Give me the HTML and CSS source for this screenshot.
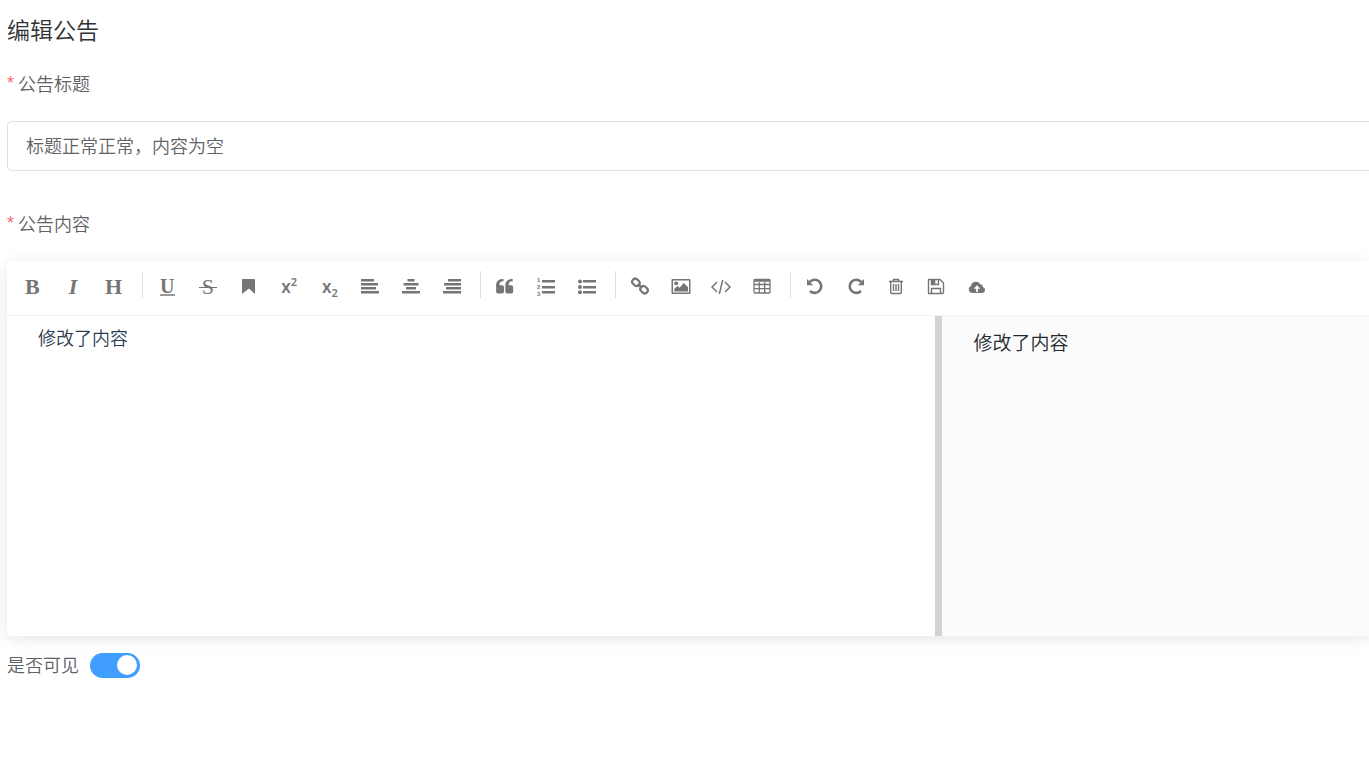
FILE: index.html
```html
<!DOCTYPE html>
<html lang="zh-CN">
<head>
  <meta charset="UTF-8" />
  <meta name="viewport" content="width=device-width, initial-scale=1.0" />
  <title>编辑公告</title>
  <link rel="stylesheet" href="styles.css">
</head>
<body>
  <h1>编辑公告</h1>
  <form class="notice-form">
    <label class="field-label required" for="title">公告标题</label>
    <input class="text-input" type="text" id="title" value="标题正常正常，内容为空" autocomplete="off" />

    <label class="field-label required" for="content">公告内容</label>
    <div class="editor">
      <div class="toolbar">
        <div class="tools tools-3">
          <button type="button" class="serif bold" aria-label="粗体">B</button>
          <button type="button" class="serif bold italic" aria-label="斜体">I</button>
          <button type="button" class="serif heading" aria-label="标题">H</button>
        </div>
        <span class="separator"></span>
        <div class="tools tools-8">
          <button type="button" class="serif underline" aria-label="下划线"><span>U</span></button>
          <button type="button" class="serif strike" aria-label="中划线"><span>S</span></button>
          <button type="button" aria-label="标记">
            <svg viewBox="0 0 22 22"><path d="M5 3h11a1 1 0 0 1 1 1v14l-6-5.500L4 18V4a1 1 0 0 1 1-1z"/></svg>
          </button>
          <button type="button" class="script" aria-label="上角标"><span>x<sup>2</sup></span></button>
          <button type="button" class="script" aria-label="下角标"><span>x<sub>2</sub></span></button>
          <button type="button" aria-label="居左">
            <svg viewBox="0 0 22 22"><path d="M2 3h13v2.500H2zM2 7h17v2.500H2zM2 11h15v2.500H2zM2 15h18v2.500H2z"/></svg>
          </button>
          <button type="button" aria-label="居中">
            <svg viewBox="0 0 22 22"><path d="M7.500 3h7v2.500h-7zM3.500 7h15v2.500h-15zM6 11h10v2.500H6zM2 15h18v2.500H2z"/></svg>
          </button>
          <button type="button" aria-label="居右">
            <svg viewBox="0 0 22 22"><path d="M7 3h13v2.500H7zM3 7h17v2.500H3zM5 11h15v2.500H5zM2 15h18v2.500H2z"/></svg>
          </button>
        </div>
        <span class="separator"></span>
        <div class="tools tools-3">
          <button type="button" aria-label="段落引用">
            <svg viewBox="0 0 22 22"><path d="M9.500 3v2.200H9A3.200 3.200 0 0 0 5.500 8.500v.8h2.600a1.900 1.900 0 0 1 1.900 1.900v4.400a1.900 1.900 0 0 1-1.900 1.900H4a1.900 1.900 0 0 1-1.900-1.900V9.200C2.100 5.500 5 3 8.500 3z"/><path d="M18.700 3v2.200h-.5a3.200 3.200 0 0 0-3.500 3.300v.8h2.600a1.900 1.900 0 0 1 1.900 1.900v4.400a1.900 1.900 0 0 1-1.900 1.900h-4.100a1.900 1.900 0 0 1-1.900-1.900V9.200c0-3.700 2.900-6.200 6.400-6.200z"/></svg>
          </button>
          <button type="button" aria-label="有序列表">
            <svg viewBox="0 0 22 22"><path d="M7 4h13v2.500H7zM7 10h13v2.500H7zM7 15h13v2.500H7z"/><text x="2" y="6">1</text><text x="2" y="13">2</text><text x="2" y="20">3</text></svg>
          </button>
          <button type="button" aria-label="无序列表">
            <svg viewBox="0 0 22 22"><path d="M7 4h13v2.500H7zM7 10h13v2.500H7zM7 15h13v2.500H7z"/><circle cx="4" cy="5.500" r="2"/><circle cx="4" cy="11" r="2"/><circle cx="4" cy="16.300" r="2"/></svg>
          </button>
        </div>
        <span class="separator"></span>
        <div class="tools tools-4">
          <button type="button" aria-label="链接">
            <svg class="line" viewBox="0 0 22 22"><g transform="rotate(42 11 10)" stroke-width="2.200"><rect x="1.500" y="7" width="8" height="6" rx="3"/><rect x="12.500" y="7" width="8" height="6" rx="3"/><path d="M8 10h6"/></g></svg>
          </button>
          <button type="button" aria-label="图片">
            <svg viewBox="0 0 22 22"><path fill-rule="evenodd" d="M2.500 3h17a1 1 0 0 1 1 1v13a1 1 0 0 1-1 1h-17a1 1 0 0 1-1-1V4a1 1 0 0 1 1-1zM3 4.400v12.200h16V4.400z"/><circle cx="6.200" cy="7.300" r="1.900"/><path d="M4.200 15.500v-2.600l3.300-3 2 1.900 4.300-4.800 4.200 4.300v4.200z"/></svg>
          </button>
          <button type="button" aria-label="代码块">
            <svg class="line" viewBox="0 0 22 22"><path stroke-width="1.500" d="M7 6l-5 5 5 5M15 6l5 5-5 5M12.700 4L9.300 18"/></svg>
          </button>
          <button type="button" aria-label="表格">
            <svg class="line" viewBox="0 0 22 22"><rect x="3" y="3.500" width="16" height="13.500" rx="1" stroke-width="1.300"/><path stroke-width="1.300" d="M3 8.500h16M3 12.700h16M8.300 6v11M13.700 6v11"/><path stroke-width="2.500" d="M3 4.500h16"/></svg>
          </button>
        </div>
        <span class="separator"></span>
        <div class="tools tools-5">
          <button type="button" aria-label="上一步">
            <svg class="line" viewBox="0 0 22 22"><path stroke-width="2.600" d="M5.800 5.800A6.600 6.600 0 1 1 6 15"/><path class="solid" d="M3 3v6.200h6.200z"/></svg>
          </button>
          <button type="button" aria-label="下一步">
            <svg class="line" viewBox="0 0 22 22"><path stroke-width="2.600" d="M16.200 5.800A6.600 6.600 0 1 0 16 15"/><path class="solid" d="M19 3v6.200h-6.200z"/></svg>
          </button>
          <button type="button" aria-label="清空">
            <svg class="line" viewBox="0 0 22 22"><path stroke-width="1.400" d="M4 5.500h14M8 5.500l.6-2h4.800l.6 2M5.700 5.500v11a1 1 0 0 0 1 1h8.600a1 1 0 0 0 1-1v-11M8.500 8v7M11 8v7M13.500 8v7"/></svg>
          </button>
          <button type="button" aria-label="保存">
            <svg class="line" viewBox="0 0 22 22"><path stroke-width="1.400" d="M4 3.500h11l3.500 3.500v9.500a1 1 0 0 1-1 1H4a.5.5 0 0 1-.5-.5V4a.5.5 0 0 1 .5-.5zM6.500 17.500v-5h9v5M6.500 3.500v5h7v-5"/><path class="solid" d="M6.500 3.500h3.800v5H6.500z"/></svg>
          </button>
          <button type="button" aria-label="发布">
            <svg viewBox="0 0 22 22"><path fill-rule="evenodd" d="M6.500 17A3.700 3.700 0 0 1 5 9.900 5 5 0 0 1 14.200 8.200a2.700 2.700 0 0 1 2.600 2.900A3 3 0 0 1 16.300 17zM11 9.200l-3.300 3.600h2.400V16h1.800v-3.200h2.400z"/></svg>
          </button>
        </div>
      </div>
      <div class="panes">
        <textarea id="content" class="source" spellcheck="false">修改了内容</textarea>
        <div class="scroll-strip"></div>
        <div class="preview"><p>修改了内容</p></div>
      </div>
    </div>

    <div class="visible-row">
      <label for="visible">是否可见</label>
      <input class="switch" type="checkbox" role="switch" id="visible" checked />
    </div>
  </form>
</body>
</html>
```
FILE: styles.css
```css
/* Basic Reset */
*, *:before, *:after {
  box-sizing: border-box;
  margin: 0;
  padding: 0;
}

body {
  padding: 14px 0 0 7px;
  background: #fff;
  color: #606266;
  font-family: "Noto Sans CJK SC", "Liberation Sans", sans-serif;
  font-size: 18px;
  font-weight: 350;
  overflow-x: hidden;
}

input,
textarea,
button {
  font: inherit;
  color: inherit;
}

h1 {
  margin-bottom: 15px;
  font-size: 23px;
  font-weight: 350;
  line-height: 30px;
  color: #303133;
}

.field-label {
  display: flex;
  align-items: center;
  height: 50px;
  margin-bottom: 12px;
  padding-bottom: 2px;
  line-height: 48px;
}

.required:before {
  content: "*";
  margin-right: 4px;
  font-family: "Liberation Sans", sans-serif;
  color: #f56c6c;
}

.text-input {
  display: block;
  width: 100%;
  height: 50px;
  margin-bottom: 28px;
  padding: 0 18px 2px;
  border: 1px solid #dcdfe6;
  border-right: 0;
  border-radius: 5px 0 0 5px;
  outline: none;
}

/* Editor */
.editor {
  border-radius: 5px 0 0 5px;
  box-shadow: 0 3px 15px rgba(0, 0, 0, 0.1);
  overflow: hidden;
}

.toolbar {
  display: flex;
  align-items: flex-start;
  padding: 8px 5px 10px;
  border-bottom: 1px solid #f2f2f2;
  background: #fff;
}

.tools {
  display: flex;
}

.tools-3 {
  width: 122px;
}

.tools-4 {
  width: 162px;
}

.tools-5 {
  width: 202px;
}

.tools-8 {
  width: 325px;
}

.tools button {
  display: flex;
  flex: 1;
  align-items: center;
  justify-content: center;
  height: 36px;
  border: 0;
  background: none;
  color: #757575;
  cursor: pointer;
}

.separator {
  width: 1px;
  height: 27px;
  margin: 2px 4px 0 8px;
  background: #e0e0e0;
}

.tools svg {
  width: 22px;
  height: 22px;
  fill: #757575;
}

.tools svg.line {
  fill: none;
  stroke: #757575;
}

.tools svg .solid {
  fill: #757575;
  stroke: none;
}

.tools svg text {
  font: bold 6px "Liberation Sans", sans-serif;
}

.tools .serif {
  font-family: "Liberation Serif", serif;
  font-size: 22px;
  font-weight: 400;
  line-height: 22px;
}

.tools .bold,
.tools .heading {
  font-weight: 700;
}

.tools .italic {
  font-style: italic;
}

.underline span {
  border-bottom: 2px solid #999;
  font-size: 20px;
  font-weight: 700;
  line-height: 16px;
}

.strike span {
  padding: 0 3px;
  background: linear-gradient(#757575, #757575) center / 100% 1px no-repeat;
}

.tools .script {
  font-family: "Noto Sans", sans-serif;
  font-size: 17px;
  font-weight: 600;
  line-height: 20px;
}

.script sup,
.script sub {
  font-size: 11px;
  line-height: 0;
}

.script sup {
  vertical-align: 7px;
}

.panes {
  display: grid;
  grid-template-columns: 37fr 7px 17fr;
  height: 320px;
}

.source {
  padding: 7px 31px;
  border: 0;
  outline: none;
  resize: none;
  line-height: 28px;
  color: #2c3e50;
}

.scroll-strip {
  background: #d3d3d3;
}

.preview {
  padding: 12px 31px;
  background: #fbfbfb;
  font-size: 19px;
  line-height: 28px;
  color: #24292e;
}

/* Visibility switch */
.visible-row {
  display: flex;
  align-items: center;
  gap: 11px;
  margin-top: 4px;
  line-height: 50px;
}

.visible-row label {
  padding-bottom: 2px;
  line-height: 48px;
}

.switch {
  appearance: none;
  width: 50px;
  height: 25px;
  padding: 2px 3px;
  border-radius: 13px;
  background: #c0c4cc;
  cursor: pointer;
}

.switch:before {
  content: "";
  display: block;
  width: 20px;
  height: 20px;
  border-radius: 50%;
  background: #fff;
}

.switch:checked {
  background: #409eff;
}

.switch:checked:before {
  margin-left: auto;
}
```
